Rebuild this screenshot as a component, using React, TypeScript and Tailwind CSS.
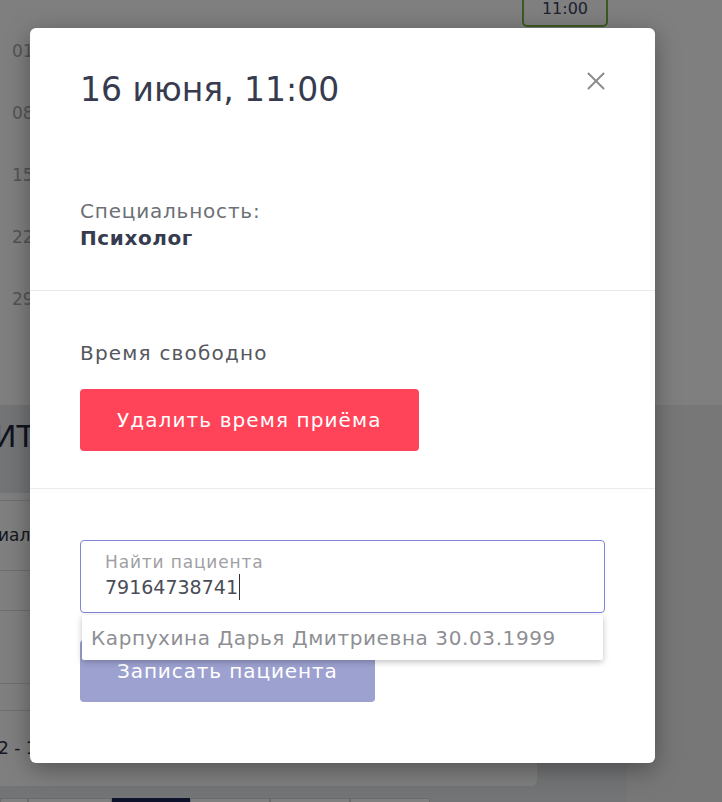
import { X } from 'lucide-react';

const dates = ['01', '08', '15', '22', '29'];

const App = () => {
    return (
        <div className="relative h-[802px] w-[722px] overflow-hidden bg-[#e7e8ec] font-['DejaVu_Sans',sans-serif]">
            {/* page under the overlay */}
            <div className="flex h-[405px] bg-white">
                <div className="flex w-[60px] flex-col pl-[12px] pt-[21px]">
                    {dates.map(d => (
                        <div key={d} className="flex h-[62px] items-center text-[17px] text-[#a7a9b0]">{d}</div>
                    ))}
                </div>
                <div className="ml-[462px] -mt-[10px] flex h-[37px] w-[86px] items-center justify-center rounded-[5px] border-2 border-[#76b340] text-[16px] text-[#3d425c]">11:00</div>
            </div>
            <div className="flex h-[397px]">
                <div className="flex w-[627px] flex-col">
                    <div className="-ml-[6px] mt-[12px] text-[30px] leading-[40px] text-[#23273b]">ИТОГИ</div>
                    <div className="-ml-[4px] mt-[36px] flex w-[541px] flex-col rounded-b-[6px] bg-white">
                        <div className="h-[8px] border-b border-[#dcdde2]" />
                        <div className="flex h-[70px] items-center border-b border-[#dcdde2] pl-[2px] text-[17px] text-[#2c3045]">иалист</div>
                        <div className="h-[40px] border-b border-[#dcdde2]" />
                        <div className="h-[73px] border-b border-[#dcdde2]" />
                        <div className="h-[27px] border-b border-[#dcdde2]" />
                        <div className="flex h-[75px] items-center pl-[2px] text-[17px] text-[#2c3045]">2 - 18 июня</div>
                    </div>
                    <div className="mt-[12px] flex">
                        <div className="h-[30px] w-[28px] border border-[#d6d7dd] bg-white" />
                        <div className="h-[30px] w-[84px] border border-[#d6d7dd] bg-white" />
                        <div className="h-[30px] w-[78px] bg-[#1f2457]" />
                        <div className="h-[30px] w-[80px] border border-[#d6d7dd] bg-white" />
                        <div className="h-[30px] w-[80px] border border-[#d6d7dd] bg-white" />
                        <div className="h-[30px] w-[80px] border border-[#d6d7dd] bg-white" />
                    </div>
                </div>
                <div className="flex-1 bg-[#eeeef1]" />
            </div>

            {/* dim overlay */}
            <div className="absolute inset-0 bg-black/50" />

            {/* modal */}
            <div className="absolute left-[30px] top-[28px] flex h-[735px] w-[625px] flex-col rounded-[6px] bg-white shadow-[0_6px_24px_rgba(0,0,0,0.35)]">
                <button className="absolute right-[44px] top-[38px] text-[#8c8c8c]">
                    <X size={30} strokeWidth={1.6} />
                </button>
                <div className="border-b border-[#ebebed] px-[50px] pb-[38px] pt-[40px]">
                    <h1 className="text-[33px] font-normal leading-[44px] text-[#363b4f]">16 июня, 11:00</h1>
                    <div className="mt-[86px] text-[20px] leading-[27px]">
                        <div className="tracking-[0.04em] text-[#6d6f76]">Специальность:</div>
                        <div className="font-bold tracking-[0.03em] text-[#363b4f]">Психолог</div>
                    </div>
                </div>
                <div className="border-b border-[#ebebed] px-[50px] pb-[37px] pt-[49px]">
                    <div className="text-[20px] leading-[27px] tracking-[0.06em] text-[#55575e]">Время свободно</div>
                    <button className="mt-[22px] inline-flex h-[62px] items-center rounded-[4px] bg-[#ff4459] px-[37px] text-[20px] tracking-[0.055em] text-white">Удалить время приёма</button>
                </div>
                <div className="px-[50px] pt-[51px]">
                    <div className="relative">
                        <div className="flex h-[73px] flex-col rounded-[4px] border-[1.5px] border-[#8185d9] pl-[24px] pt-[11px]">
                            <span className="text-[17px] leading-[20px] tracking-[0.05em] text-[#a0a0a4]">Найти пациента</span>
                            <div className="mt-[2px] flex items-center text-[19px] leading-[26px] text-[#4a4c57]">
                                79164738741
                                <span className="ml-px inline-block h-[26px] w-px bg-[#333]" />
                            </div>
                        </div>
                        <div className="absolute left-[2px] right-[2px] top-full z-10 mt-[2px] flex h-[45px] items-center rounded-[2px] bg-white pl-[9px] text-[20px] tracking-[0.03em] text-[#8e8f94] shadow-[0_2px_6px_rgba(0,0,0,0.25)]">
                            Карпухина Дарья Дмитриевна 30.03.1999
                        </div>
                    </div>
                    <button className="mt-[27px] inline-flex h-[62px] items-center rounded-[4px] bg-[#9da1d0] px-[37px] text-[20px] tracking-[0.045em] text-white">Записать пациента</button>
                </div>
            </div>
        </div>
    );
};

export default App;
